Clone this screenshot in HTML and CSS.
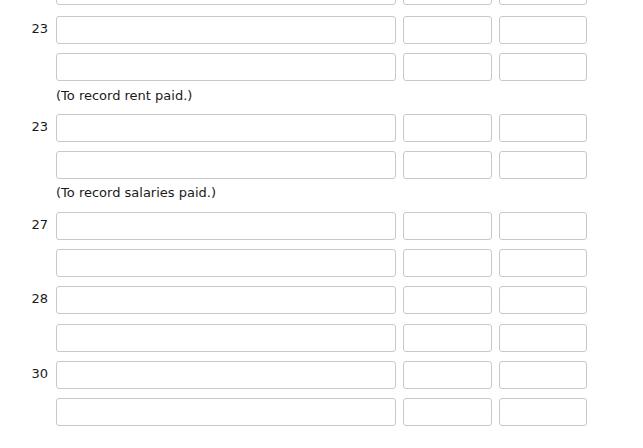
FILE: index.html
```html
<!DOCTYPE html>
<html>
<head>
<meta charset="utf-8">
<link rel="stylesheet" href="styles.css">
</head>
<body>
<div class="journal">
  <div class="row lead"><span class="date"></span><input class="acct"><input class="amt"><input class="amt"></div>

  <div class="row"><span class="date">23</span><input class="acct"><input class="amt"><input class="amt"></div>
  <div class="row"><span class="date"></span><input class="acct"><input class="amt"><input class="amt"></div>
  <div class="note">(To record rent paid.)</div>

  <div class="row"><span class="date">23</span><input class="acct"><input class="amt"><input class="amt"></div>
  <div class="row"><span class="date"></span><input class="acct"><input class="amt"><input class="amt"></div>
  <div class="note">(To record salaries paid.)</div>

  <div class="row"><span class="date">27</span><input class="acct"><input class="amt"><input class="amt"></div>
  <div class="row"><span class="date"></span><input class="acct"><input class="amt"><input class="amt"></div>

  <div class="row"><span class="date">28</span><input class="acct"><input class="amt"><input class="amt"></div>
  <div class="row"><span class="date"></span><input class="acct"><input class="amt"><input class="amt"></div>

  <div class="row"><span class="date">30</span><input class="acct"><input class="amt"><input class="amt"></div>
  <div class="row"><span class="date"></span><input class="acct"><input class="amt"><input class="amt"></div>
</div>
</body>
</html>
```
FILE: styles.css
```css
html, body {
  margin: 0;
  padding: 0;
  background: #fff;
}
body {
  font-family: "DejaVu Sans", Verdana, sans-serif;
  font-size: 13px;
  color: #1a1a1a;
  overflow: hidden;
}
.journal {
  display: flex;
  flex-direction: column;
  margin-top: -23px;
}
.row {
  display: flex;
  align-items: center;
  height: 28px;
  margin-bottom: 9.3px;
}
.row.lead {
  margin-bottom: 11px;
}
.date {
  width: 48px;
  text-align: right;
  margin-right: 8px;
  margin-top: -3px;
  flex: none;
}
input {
  box-sizing: border-box;
  height: 28px;
  border: 1px solid #c8c8c8;
  border-radius: 3px;
  background: #fff;
  margin: 0;
  padding: 0;
  flex: none;
}
.acct {
  width: 340px;
  margin-right: 7px;
}
.amt {
  width: 89px;
  margin-right: 7px;
}
.amt:last-child {
  width: 88px;
  margin-right: 0;
}
.note {
  margin-left: 56px;
  height: 16px;
  line-height: 16px;
  margin-top: -3px;
  margin-bottom: 10.3px;
}
```
